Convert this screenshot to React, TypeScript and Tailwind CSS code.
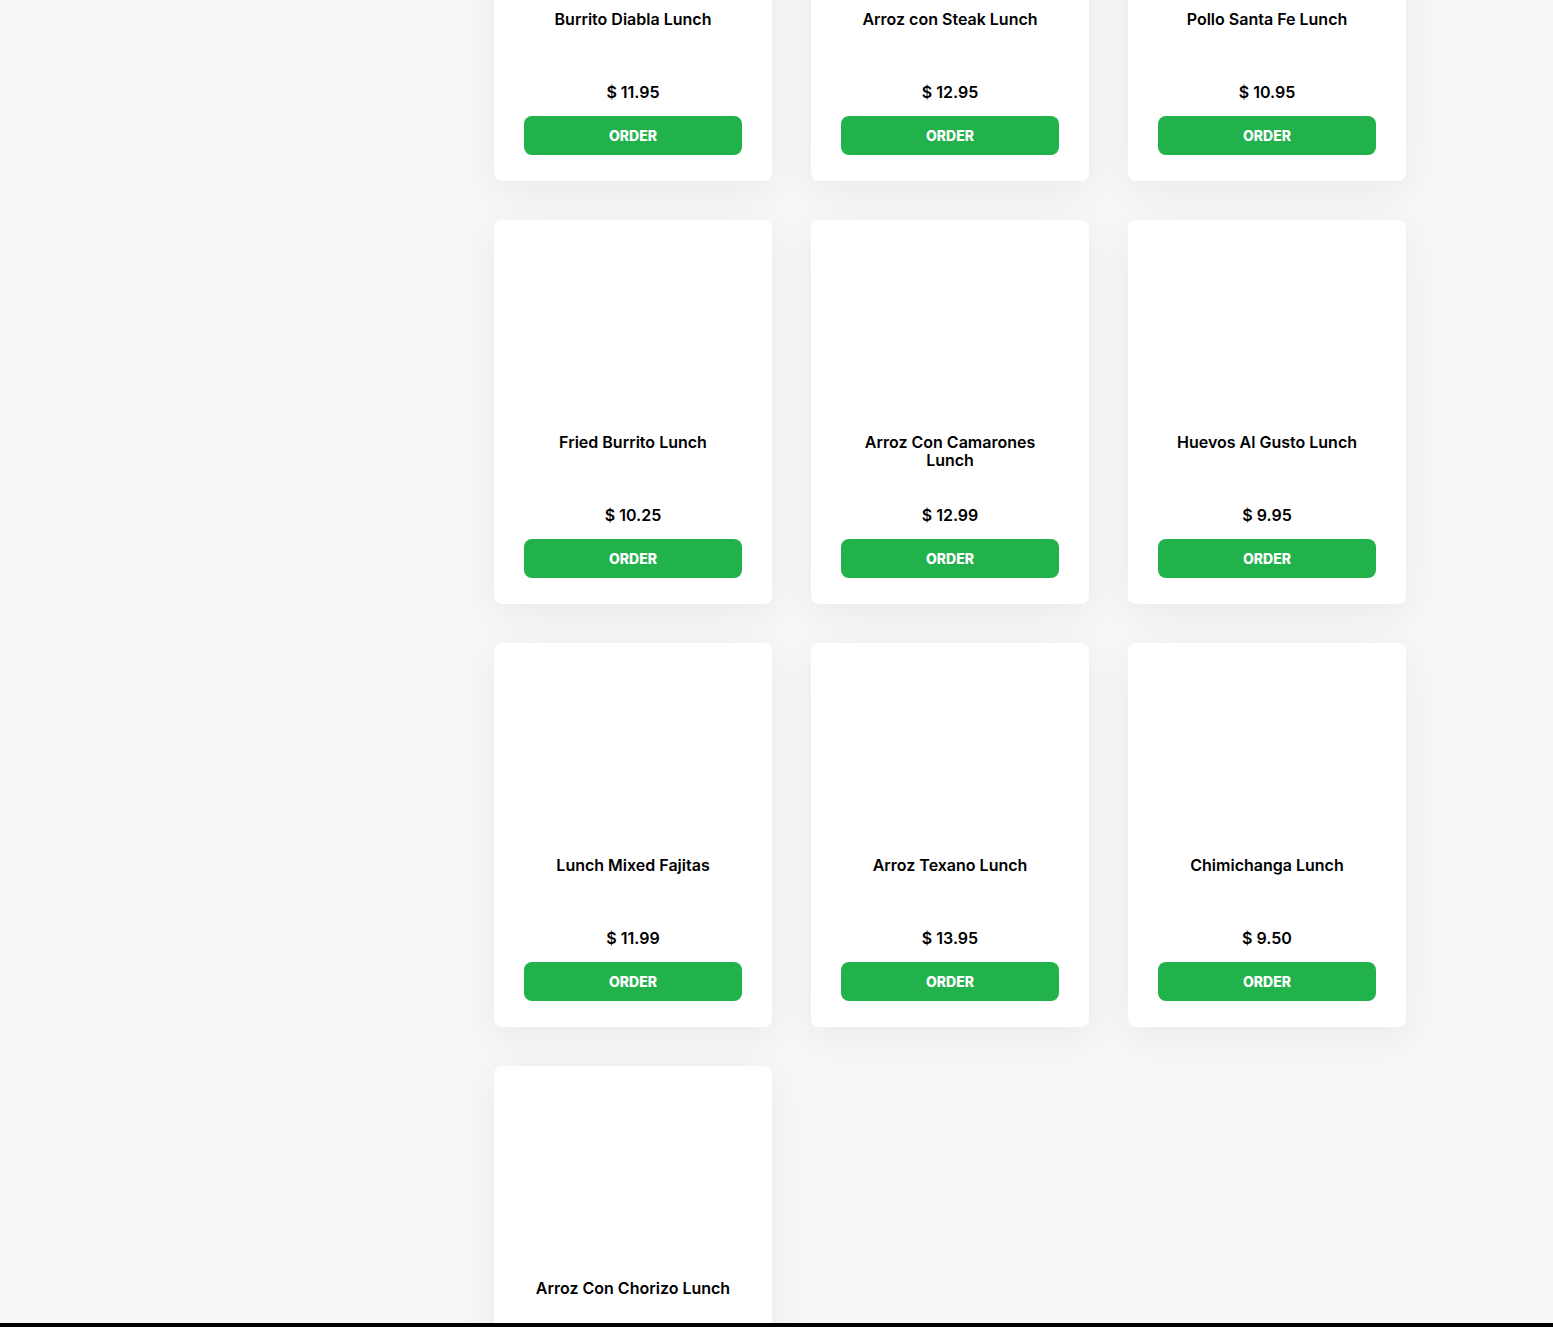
import React from 'react';

type Item = { name: string; price: string };

const items: Item[] = [
    { name: 'Burrito Diabla Lunch', price: '11.95' },
    { name: 'Arroz con Steak Lunch', price: '12.95' },
    { name: 'Pollo Santa Fe Lunch', price: '10.95' },
    { name: 'Fried Burrito Lunch', price: '10.25' },
    { name: 'Arroz Con Camarones Lunch', price: '12.99' },
    { name: 'Huevos Al Gusto Lunch', price: '9.95' },
    { name: 'Lunch Mixed Fajitas', price: '11.99' },
    { name: 'Arroz Texano Lunch', price: '13.95' },
    { name: 'Chimichanga Lunch', price: '9.50' },
    { name: 'Arroz Con Chorizo Lunch', price: '10.95' },
];

const MenuCard = ({ item }: { item: Item }) => (
    <div className="flex flex-col bg-white rounded-[8px] shadow-[0_10px_40px_rgba(0,0,0,0.06)] h-[384px]">
        {/* image placeholder */}
        <div className="h-[213px] rounded-t-[8px]" />
        <div className="h-[73px] px-[40px] text-center text-[16px] leading-[18px] font-semibold text-black">
            {item.name}
        </div>
        <div className="text-center text-[16px] leading-[18px] font-semibold text-black">$ {item.price}</div>
        <div className="px-[30px] pt-[15px] pb-[26px]">
            <button className="w-full h-[39px] rounded-[8px] bg-[#22b24c] text-white text-[14px] font-extrabold">
                ORDER
            </button>
        </div>
    </div>
);

export default function App() {
    return (
        <div className="min-h-screen bg-[#f7f7f7] overflow-hidden" style={{ fontFamily: 'Inter, "Liberation Sans", sans-serif' }}>
            <div className="flex">
                <aside className="w-[494px] shrink-0" />
                <main className="-mt-[203px] pb-[60px]">
                    <div className="grid grid-cols-[repeat(3,278px)] gap-[39px]">
                        {items.map((it) => (
                            <MenuCard key={it.name} item={it} />
                        ))}
                    </div>
                </main>
            </div>
            <div className="fixed left-0 right-0 bottom-0 h-[4px] bg-black" />
        </div>
    );
}
